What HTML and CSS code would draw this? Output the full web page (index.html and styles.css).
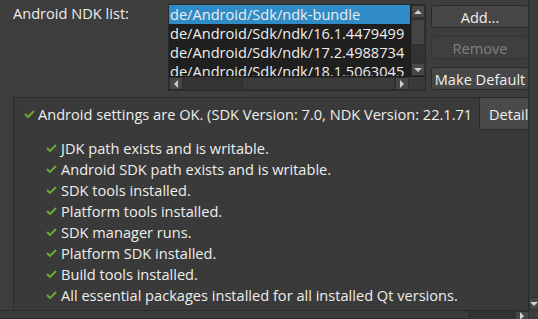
FILE: index.html
```html
<!DOCTYPE html>
<html lang="en">
<head>
    <meta charset="UTF-8">
    <title>Android Settings</title>
    <link rel="stylesheet" href="styles.css">
</head>
<body>
    <div class="window">
        <div class="viewport">
            <div class="content">
                <!-- NDK list row -->
                <div class="ndk-row">
                    <div class="ndk-label">Android NDK list:</div>
                    <div class="listbox">
                        <div class="list-body">
                            <ul class="list-items">
                                <li class="selected">de/Android/Sdk/ndk-bundle</li>
                                <li>de/Android/Sdk/ndk/16.1.4479499</li>
                                <li>de/Android/Sdk/ndk/17.2.4988734</li>
                                <li>de/Android/Sdk/ndk/18.1.5063045</li>
                            </ul>
                            <div class="list-vscroll">
                                <span class="sb-btn"><span class="tri tri-up"></span></span>
                                <span class="sb-thumb-v"></span>
                                <span class="sb-fill"></span>
                                <span class="sb-btn"><span class="tri tri-down"></span></span>
                            </div>
                        </div>
                        <div class="list-hscroll">
                            <span class="sb-btn"><span class="tri tri-left"></span></span>
                            <span class="sb-track-h"></span>
                            <span class="sb-thumb-h"></span>
                            <span class="sb-btn"><span class="tri tri-right"></span></span>
                            <span class="sb-corner"></span>
                        </div>
                    </div>
                    <div class="ndk-buttons">
                        <button class="btn">Add...</button>
                        <button class="btn" disabled>Remove</button>
                        <button class="btn">Make Default</button>
                    </div>
                </div>

                <!-- Status panel -->
                <div class="status-panel">
                    <div class="status-summary">
                        <svg class="check" width="12" height="8" viewBox="0 0 12 8"><polyline points="1,4 4,7 10,1" /></svg>
                        <span class="summary-text">Android settings are OK. (SDK Version: 7.0, NDK Version: 22.1.71</span>
                        <button class="details-btn">Details</button>
                    </div>
                    <ul class="checks">
                        <li><svg class="check" width="12" height="8" viewBox="0 0 12 8"><polyline points="1,4 4,7 10,1" /></svg>JDK path exists and is writable.</li>
                        <li><svg class="check" width="12" height="8" viewBox="0 0 12 8"><polyline points="1,4 4,7 10,1" /></svg>Android SDK path exists and is writable.</li>
                        <li><svg class="check" width="12" height="8" viewBox="0 0 12 8"><polyline points="1,4 4,7 10,1" /></svg>SDK tools installed.</li>
                        <li><svg class="check" width="12" height="8" viewBox="0 0 12 8"><polyline points="1,4 4,7 10,1" /></svg>Platform tools installed.</li>
                        <li><svg class="check" width="12" height="8" viewBox="0 0 12 8"><polyline points="1,4 4,7 10,1" /></svg>SDK manager runs.</li>
                        <li><svg class="check" width="12" height="8" viewBox="0 0 12 8"><polyline points="1,4 4,7 10,1" /></svg>Platform SDK installed.</li>
                        <li><svg class="check" width="12" height="8" viewBox="0 0 12 8"><polyline points="1,4 4,7 10,1" /></svg>Build tools installed.</li>
                        <li><svg class="check" width="12" height="8" viewBox="0 0 12 8"><polyline points="1,4 4,7 10,1" /></svg>All essential packages installed for all installed Qt versions.</li>
                    </ul>
                </div>
            </div>
        </div>

        <!-- outer scrollbars -->
        <div class="outer-vscroll">
            <span class="sb-fill"></span>
            <span class="sb-btn"><span class="tri tri-down"></span></span>
        </div>
        <div class="outer-hscroll">
            <span class="sb-thumb-h outer-thumb"></span>
            <span class="sb-track-h"></span>
            <span class="sb-btn"><span class="tri tri-right"></span></span>
        </div>
        <div class="outer-corner"></div>
    </div>
</body>
</html>
```

FILE: styles.css
```css
* {
    margin: 0;
    padding: 0;
    box-sizing: border-box;
}
body {
    font-family: "Open Sans", "Noto Sans", sans-serif;
    font-size: 14.6px;
    color: #eeeeec;
    background: #3d3d3d;
    width: 538px;
    height: 319px;
    overflow: hidden;
}
ul {
    list-style: none;
}
.window {
    display: grid;
    grid-template-columns: 529px 9px;
    grid-template-rows: 310px 9px;
    width: 538px;
    height: 319px;
}
.viewport {
    overflow: hidden;
    border-right: 1px solid #2c2c2c;
}
.content {
    width: 600px;
    padding: 4px 0 0 13px;
}

/* NDK row */
.ndk-row {
    display: flex;
    align-items: flex-start;
}
.ndk-label {
    width: 155px;
    line-height: 19px;
    padding-top: 0;
}
.listbox {
    width: 258px;
    height: 87px;
    border: 1px solid #2a2a2a;
    background: #1f1f1f;
    display: flex;
    flex-direction: column;
}
.list-body {
    display: flex;
    height: 72px;
    overflow: hidden;
}
.list-items {
    width: 241px;
    overflow: hidden;
}
.list-items li {
    height: 19px;
    line-height: 19px;
    padding-left: 1px;
    white-space: nowrap;
}
.list-items li.selected {
    background: #308cc6;
}
.list-vscroll {
    width: 15px;
    display: flex;
    flex-direction: column;
    background: #333333;
    border-left: 1px solid #1c1c1c;
}
.sb-btn {
    display: flex;
    align-items: center;
    justify-content: center;
    width: 14px;
    height: 13px;
    background: #474747;
    border: 1px solid #2e2e2e;
    flex-shrink: 0;
}
.sb-thumb-v {
    height: 26px;
    margin-top: 1px;
    background: #444444;
    border: 1px solid #2e2e2e;
}
.sb-fill {
    flex: 1;
}
.list-hscroll {
    display: flex;
    height: 14px;
    background: #333333;
    border-top: 1px solid #1c1c1c;
}
.sb-track-h {
    width: 59px;
}
.sb-thumb-h {
    width: 153px;
    background: #3b3b3b;
    border: 1px solid #2e2e2e;
}
.sb-corner {
    flex: 1;
    background: #3a3a3a;
}
.tri {
    width: 0;
    height: 0;
    border: 3px solid transparent;
}
.tri-up {
    border-bottom: 4px solid #cfcfcf;
    border-top-width: 0;
    border-left-width: 4px;
    border-right-width: 4px;
}
.tri-down {
    border-top: 4px solid #cfcfcf;
    border-bottom-width: 0;
    border-left-width: 4px;
    border-right-width: 4px;
}
.tri-left {
    border-right: 4px solid #cfcfcf;
    border-left-width: 0;
    border-top-width: 4px;
    border-bottom-width: 4px;
}
.tri-right {
    border-left: 4px solid #cfcfcf;
    border-right-width: 0;
    border-top-width: 4px;
    border-bottom-width: 4px;
}

/* buttons */
.ndk-buttons {
    display: flex;
    flex-direction: column;
    gap: 8px;
    margin-left: 5px;
    padding-top: 1px;
    width: 98px;
}
.btn {
    height: 23px;
    font-family: inherit;
    font-size: inherit;
    color: #eeeeec;
    background: #474747;
    border: 1px solid #2a2a2a;
    border-radius: 3px;
    white-space: nowrap;
    overflow: hidden;
}
.btn:disabled {
    color: #7f7f7f;
    background: #3f3f3f;
    border-color: #333333;
}

/* status panel */
.status-panel {
    margin-top: 6px;
    width: 570px;
    height: 240px;
    background: #3a3a3a;
    border: 1px solid #2b2b2b;
}
.status-summary {
    display: flex;
    align-items: center;
    height: 33px;
    margin-top: -1px;
    padding-left: 10px;
}
.summary-text {
    width: 434px;
    overflow: hidden;
    white-space: nowrap;
}
.details-btn {
    margin-left: 7px;
    height: 33px;
    width: 80px;
    font-family: inherit;
    font-size: inherit;
    color: #eeeeec;
    text-align: left;
    padding-left: 9px;
    background: #4a4a4a;
    border: 1px solid #2a2a2a;
}
.check {
    flex-shrink: 0;
    margin-right: 2px;
}
.check polyline {
    fill: none;
    stroke: #6aa936;
    stroke-width: 2;
}
.checks {
    padding: 7px 0 0 32px;
}
.checks li {
    display: flex;
    align-items: center;
    height: 21px;
    white-space: nowrap;
}
.checks .check {
    margin-right: 3px;
}

/* outer scrollbars */
.outer-vscroll {
    display: flex;
    flex-direction: column;
    background: #3a3a3a;
}
.outer-vscroll .sb-btn {
    width: 9px;
    border-right: none;
}
.outer-hscroll {
    display: flex;
    background: #333333;
    border-top: 1px solid #2a2a2a;
}
.outer-hscroll .outer-thumb {
    width: 470px;
    border-top: none;
    border-left: none;
}
.outer-hscroll .sb-track-h {
    width: 46px;
}
.outer-hscroll .sb-btn {
    height: 9px;
    border-bottom: none;
}
.outer-corner {
    background: #3d3d3d;
}
```
